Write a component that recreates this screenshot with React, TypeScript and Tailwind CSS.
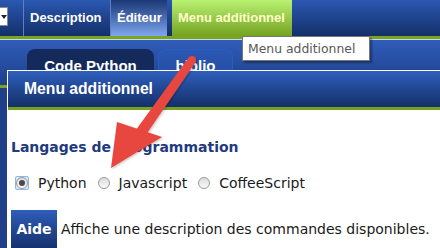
import React from "react";

const dejavu = "font-['DejaVu_Sans',sans-serif]";
const arial = "font-['Liberation_Sans',Arial,sans-serif]";

function Radio({ checked }: { checked?: boolean }) {
  const dot = (
    <span className="w-[12px] h-[12px] rounded-full border border-[#9a9a9a] bg-linear-to-b from-[#dcdcdc] to-[#fafafa] flex items-center justify-center">
      {checked && <span className="w-[6px] h-[6px] rounded-full bg-[#4a4a4a]" />}
    </span>
  );
  if (!checked) return dot;
  return (
    <span className="w-[14px] h-[14px] -mx-px rounded-[2px] border border-[#8db6ee] bg-[#d9e8fb] flex items-center justify-center">
      {dot}
    </span>
  );
}

function Arrow() {
  // tail -> head, drawn like a screenshot annotation
  return (
    <svg className="absolute left-0 top-0 pointer-events-none" width="440" height="248" viewBox="0 0 440 248">
      <defs>
        <filter id="sh" x="-20%" y="-20%" width="140%" height="140%">
          <feDropShadow dx="1" dy="1" stdDeviation="1" floodColor="#000" floodOpacity="0.25" />
        </filter>
      </defs>
      <g fill="#e8473f" filter="url(#sh)">
        <circle cx="192" cy="60" r="4" />
        <polygon points="195.3,62.4 188.7,57.6 135.5,130.5 145.5,135.5" />
        <polygon points="111,168 117,122 162,137" />
      </g>
    </svg>
  );
}

export default function App() {
  return (
    <div className="relative w-[440px] h-[248px] overflow-hidden bg-[#1f3f88]">
      {/* main menu bar */}
      <div className={`h-[36px] flex bg-linear-to-b from-[#2b58b2] to-[#14306a] ${arial} text-[13px] font-bold text-white`}>
        <div className="w-[8px] mt-[7px] h-[19px] bg-white border border-[#8a8a8a] border-l-0 flex items-center">
          <span className="ml-px w-0 h-0 border-x-[3px] border-x-transparent border-t-[4px] border-t-[#222]" />
        </div>
        <div className="ml-[15px] w-[87px] border-l border-[#5d7fc4] pl-[6px] flex items-center">Description</div>
        <div className="w-[57px] border-l border-[#5d7fc4] pl-[6px] flex items-center bg-linear-to-b from-[#1c3876] to-[#80a7ef]">Éditeur</div>
        <div className="ml-[5px] w-[120px] pl-[6px] flex items-center bg-linear-to-b from-[#b9f272] to-[#76a31c] text-[#ffffc8]">
          Menu additionnel
        </div>
      </div>
      <div className="h-[3px] bg-[#7aa51e]" />
      <div className="h-px bg-[#c9d6ee]" />

      {/* page tabs */}
      <div className="h-[45px] bg-linear-to-b from-[#2f5dba] to-[#1f3f88] flex items-end pl-[27px] gap-[4px]">
        <div className={`w-[127px] h-[36px] rounded-t-[8px] bg-[#132a5a] ${arial} font-bold text-[15px] text-white leading-none pt-[9px] text-center`}>
          Code Python
        </div>
        <div className={`w-[75px] h-[36px] rounded-t-[8px] border border-b-0 border-[#2a5cc4] bg-linear-to-b from-[#2b58b4] to-[#234a9c] ${arial} font-bold text-[15px] text-white leading-none pt-[8px] text-center`}>
          biblio
        </div>
      </div>
      <div className="h-[3px] bg-[#7aa51e]" />

      {/* overlay panel */}
      <div className="absolute left-[7px] top-[70px] right-0 bottom-0 bg-white border-l border-t border-white">
        <div className={`h-[36px] bg-linear-to-b from-[#2f5fbd] to-[#14306a] flex items-center pl-[16px] ${arial} font-bold text-[15.7px] text-white`}>
          Menu additionnel
        </div>
        <div className="h-[3px] bg-[#76a21e]" />
        <div className={`${dejavu} text-[14px] text-[#1a1a1a]`}>
          <div className="pl-[3px] pt-[28px] font-bold text-[#1f3b7c] leading-[18px]">Langages de programmation</div>
          <div className="pl-[8px] mt-[18px] flex items-center h-[18px]">
            <Radio checked />
            <span className="ml-[10px] mr-[11px]">Python</span>
            <Radio />
            <span className="ml-[9px] mr-[11px]">Javascript</span>
            <Radio />
            <span className="ml-[9px]">CoffeeScript</span>
          </div>
          <div className="pl-[3px] mt-[18px] flex items-start">
            <div className="w-[46px] h-[40px] bg-linear-to-b from-[#2f5dba] to-[#14306a] text-white font-bold flex items-start pt-[9px] justify-center">
              Aide
            </div>
            <span className="ml-[4px] pt-[9px]">Affiche une description des commandes disponibles.</span>
          </div>
        </div>
      </div>

      {/* native tooltip */}
      <div className={`absolute left-[242px] top-[36px] w-[128px] h-[25px] bg-white border border-[#767676] shadow-[2px_2px_2px_rgba(0,0,0,0.35)] ${dejavu} text-[12.4px] text-[#575757] pl-[5px] leading-[23px]`}>
        Menu additionnel
      </div>

      <Arrow />
    </div>
  );
}
